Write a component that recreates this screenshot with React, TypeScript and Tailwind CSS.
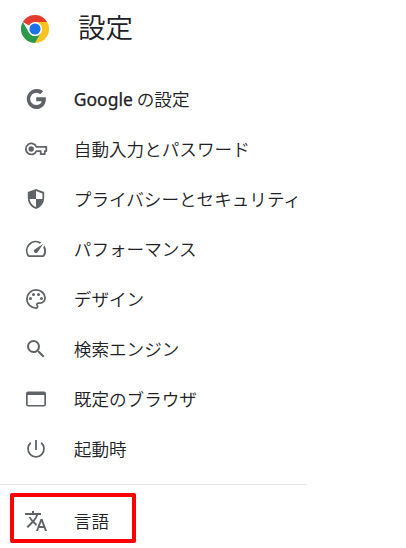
import React from 'react';

interface MenuItem {
  id: string;
  label: React.ReactNode;
  icon: React.ReactNode;
}

const Icon = ({ children, className = 'size-6' }: { children: React.ReactNode; className?: string }) => (
  <svg viewBox="0 0 24 24" fill="currentColor" className={className}>
    {children}
  </svg>
);

const ChromeLogo = () => (
  <svg viewBox="0 0 48 48" className="size-7">
    <path d="M24 24 3.2 12A24 24 0 0 1 44.8 12H24Z" fill="#e33b2e" />
    <path d="M24 12H44.8A24 24 0 0 1 24 48L34.4 30Z" fill="#fcc31e" />
    <path d="M3.2 12 13.6 30A12 12 0 0 0 34.4 30L24 48A24 24 0 0 1 3.2 12Z" fill="#2a9a49" />
    <circle cx="24" cy="24" r="12" fill="#fff" />
    <circle cx="24" cy="24" r="9.5" fill="#1a73e8" />
  </svg>
);

const menuItems: MenuItem[] = [
  {
    id: 'google',
    label: (
      <>
        <span className="font-['Noto_Sans'] text-[17.5px] font-normal [-webkit-text-stroke:0.25px_#202124]">Google</span> の設定
      </>
    ),
    icon: (
      <Icon>
        <path d="M21.8 10.2H12.2v4.1h5.5c-.5 2.5-2.6 3.8-5.4 3.8a6.1 6.1 0 1 1 3.9-10.8l3.1-3.1A10.1 10.1 0 1 0 12.2 22.1c5.1 0 9.7-3.7 9.7-10.1 0-.6-.1-1.2-.1-1.8z" />
      </Icon>
    ),
  },
  {
    id: 'autofill',
    label: '自動入力とパスワード',
    icon: (
      <Icon>
        <path
          d="M12.4 9.8h9.9v4.3h-1.5v3h-4.1v-3h-4.3A5.5 5.5 0 1 1 12.4 9.8z"
          fill="none"
          stroke="currentColor"
          strokeWidth="1.8"
          strokeLinejoin="round"
        />
        <circle cx="7.2" cy="12" r="2.7" />
      </Icon>
    ),
  },
  {
    id: 'privacy',
    label: 'プライバシーとセキュリティ',
    icon: (
      <Icon>
        <path
          fillRule="evenodd"
          d="M12 2 3.8 5v6.1c0 5.05 3.6 9.76 8.2 10.9 4.6-1.14 8.2-5.85 8.2-10.9V5L12 2zm0 2.1 6.4 2.3V12H12V4.1zM5.6 12H12v7.93c-3.3-1.03-5.9-4.23-6.4-7.93z"
        />
      </Icon>
    ),
  },
  {
    id: 'performance',
    label: 'パフォーマンス',
    icon: (
      <Icon>
        <path d="m20.38 8.57-1.23 1.85a8 8 0 0 1-.22 7.78H5.07A8 8 0 0 1 15.58 6.65l1.85-1.23A10 10 0 0 0 3.35 19a2 2 0 0 0 1.72 1h13.85a2 2 0 0 0 1.74-1 10 10 0 0 0-.27-10.44zm-9.79 6.84a2 2 0 0 0 2.83 0l5.66-8.49-8.49 5.66a2 2 0 0 0 0 2.83z" />
      </Icon>
    ),
  },
  {
    id: 'appearance',
    label: 'デザイン',
    icon: (
      <Icon>
        <path
          d="M12 21.1A9.1 9.1 0 1 1 12 2.9c5 0 9.1 3.6 9.1 8.1 0 2.8-2.3 5.1-5.1 5.1h-1.8a1.4 1.4 0 0 0-1 2.3c.9 1 .2 2.7-1.2 2.7z"
          fill="none"
          stroke="currentColor"
          strokeWidth="1.8"
        />
        <circle cx="6.5" cy="11.5" r="1.5" />
        <circle cx="9.5" cy="7.5" r="1.5" />
        <circle cx="14.5" cy="7.5" r="1.5" />
        <circle cx="17.5" cy="11.5" r="1.5" />
      </Icon>
    ),
  },
  {
    id: 'search',
    label: '検索エンジン',
    icon: (
      <Icon>
        <path d="M15.5 14h-.79l-.28-.27A6.471 6.471 0 0 0 16 9.5 6.5 6.5 0 1 0 9.5 16c1.61 0 3.09-.59 4.23-1.57l.27.28v.79l5 4.99L20.49 19l-4.99-5zm-6 0C7.01 14 5 11.99 5 9.5S7.01 5 9.5 5 14 7.01 14 9.5 11.99 14 9.5 14z" />
      </Icon>
    ),
  },
  {
    id: 'browser',
    label: '既定のブラウザ',
    icon: (
      <Icon>
        <path d="M20 4.4H4a2 2 0 0 0-2 2v11.2c0 1.1.9 2 2 2h16a2 2 0 0 0 2-2V6.4a2 2 0 0 0-2-2zm.3 13.5H3.7V8h16.6v9.9z" />
      </Icon>
    ),
  },
  {
    id: 'startup',
    label: '起動時',
    icon: (
      <Icon>
        <path
          d="M12 3v10M6.8 5.7a8 8 0 1 0 10.4 0"
          fill="none"
          stroke="currentColor"
          strokeWidth="1.8"
        />
      </Icon>
    ),
  },
];

const MenuRow = ({ item }: { item: MenuItem }) => (
  <li className="flex h-[50px] items-center pl-[24.4px]">
    <span className="text-[#5f6368]">{item.icon}</span>
    <span className="ml-[25.4px] whitespace-nowrap text-[17.6px] leading-6">{item.label}</span>
  </li>
);

const App: React.FC = () => {
  return (
    <div className="h-[548px] w-[406px] overflow-hidden bg-white font-['Noto_Sans_CJK_JP',sans-serif] font-[350] text-[#202124]">
      <header className="flex h-[58px] items-center pl-[21px]">
        <ChromeLogo />
        <h1 className="mb-[6px] ml-[29px] text-[27.5px] leading-10">設定</h1>
      </header>

      <ul className="mt-4">
        {menuItems.map(item => (
          <MenuRow key={item.id} item={item} />
        ))}
      </ul>

      <div className="mt-2.5 h-px w-[307px] bg-[#e8e8e8]" />

      {/* Highlighted entry */}
      <div className="mt-2 ml-2.5 flex h-[50px] w-[126px] items-center rounded-[2px] border-4 border-[#ff0000] pl-[10.4px]">
        <span className="mt-[5px] text-[#5f6368]">
          <Icon>
            <path d="m12.87 15.07-2.54-2.51.03-.03A17.52 17.52 0 0 0 14.07 6H17V4h-7V2H8v2H1v1.99h11.17C11.5 7.92 10.44 9.75 9 11.35 8.07 10.32 7.3 9.19 6.69 8h-2c.73 1.63 1.73 3.17 2.98 4.56l-5.09 5.02L4 19l5-5 3.11 3.11.76-2.04zM18.5 10h-2L12 22h2l1.12-3h4.75L21 22h2l-4.5-12zm-2.62 7 1.62-4.33L19.12 17h-3.24z" />
          </Icon>
        </span>
        <span className="mt-[5px] ml-[25.4px] text-[17.6px] leading-6">言語</span>
      </div>
    </div>
  );
};

export default App;
